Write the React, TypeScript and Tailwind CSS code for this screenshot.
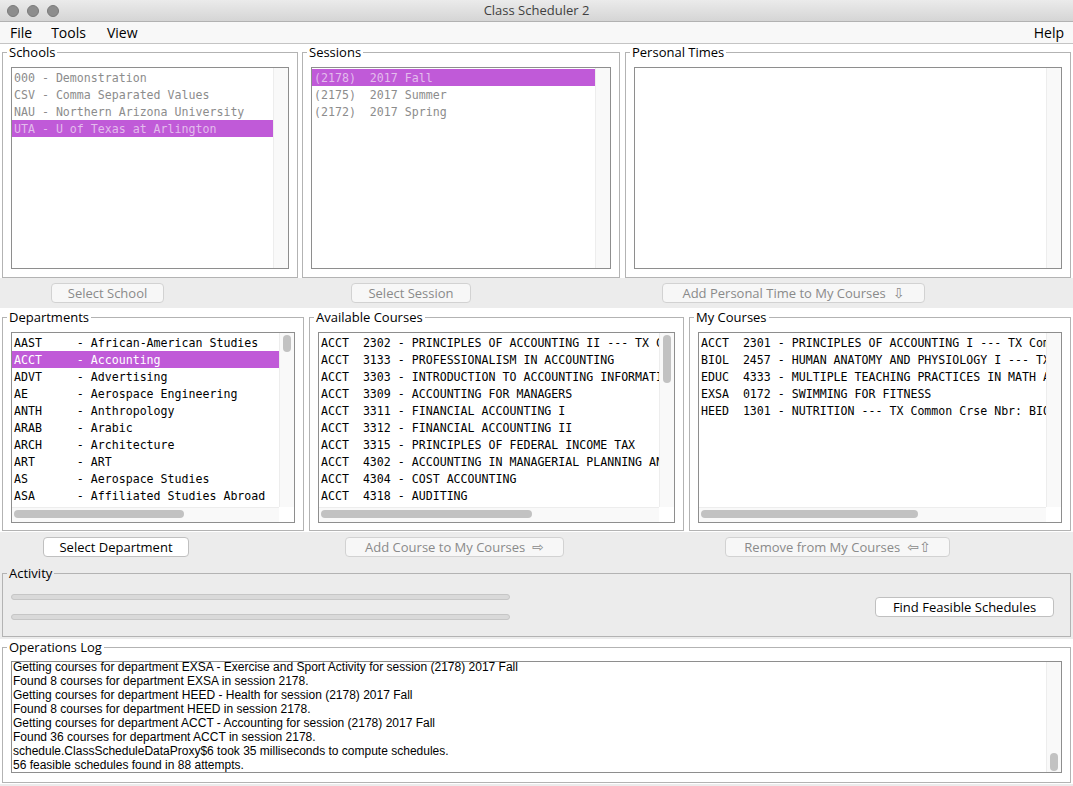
import React from 'react';
import clsx from 'clsx';

const ui = { fontFamily: '"Open Sans", "DejaVu Sans", sans-serif' };
const mono = { fontFamily: '"DejaVu Sans Mono", "Liberation Mono", monospace' };
const log = { fontFamily: '"Liberation Sans", Arial, sans-serif' };
const glyph = { fontFamily: '"DejaVu Sans", sans-serif' };

interface GroupProps {
  title: string;
  className?: string;
  children?: React.ReactNode;
}

// titled border panel, like a swing TitledBorder
const Group: React.FC<GroupProps> = ({ title, className, children }) => (
  <fieldset className={clsx('border border-[#b3b3b3] min-w-0 flex flex-col px-[8px]', className)}>
    <legend className="-ml-[4px] px-[2px] text-[13px] leading-[16px] text-black" style={ui}>
      {title}
    </legend>
    {children}
  </fieldset>
);

interface ListBoxProps {
  children?: React.ReactNode;
  vThumb?: string;
  hThumb?: string;
  horizontal?: boolean;
}

const ListBox: React.FC<ListBoxProps> = ({ children, vThumb, hThumb, horizontal }) => (
  <div className="flex-1 min-h-0 flex flex-col border border-[#8e8e8e] bg-white overflow-hidden">
    <div className="flex-1 min-h-0 flex">
      <div className="flex-1 min-w-0 overflow-hidden pt-[1px] text-[11.6px] leading-[17px]" style={mono}>
        {children}
      </div>
      <div className="w-[15px] shrink-0 bg-[#f9f9f9] border-l border-[#ededed]">
        {vThumb && <div className={clsx('w-[8px] mx-auto rounded-full bg-[#c2c2c2]', vThumb)} />}
      </div>
    </div>
    {horizontal && (
      <div className="h-[15px] shrink-0 flex">
        <div className="flex-1 bg-[#f9f9f9] border-t border-[#ededed] pl-[2px] pt-[2px]">
          {hThumb && <div className={clsx('h-[8px] rounded-full bg-[#c2c2c2]', hThumb)} />}
        </div>
        <div className="w-[15px] bg-white" />
      </div>
    )}
  </div>
);

interface RowProps {
  text: string;
  selected?: boolean;
  muted?: boolean;
}

const Row: React.FC<RowProps> = ({ text, selected, muted }) => (
  <div
    className={clsx(
      'h-[17px] pl-[2px] pt-[1px] whitespace-pre',
      selected && 'bg-[#c05ad8]',
      selected && muted && 'text-[#e3bdec]',
      selected && !muted && 'text-white',
      !selected && muted && 'text-[#8c8c8c]',
      !selected && !muted && 'text-black'
    )}
  >
    {text}
  </div>
);

interface BtnProps {
  label: string;
  arrow?: string;
  disabled?: boolean;
  className?: string;
}

const Btn: React.FC<BtnProps> = ({ label, arrow, disabled, className }) => (
  <button
    type="button"
    className={clsx(
      'h-[20px] shrink-0 rounded-[4px] border text-[13px] leading-none flex items-center justify-center',
      disabled ? 'bg-[#f7f7f7] border-[#d2d2d2] text-[#8a8a8a]' : 'bg-white border-[#c0c0c0] text-black',
      className
    )}
    style={ui}
  >
    {label}
    {arrow && (
      <span className="ml-[7px] text-[14px]" style={glyph}>
        {arrow}
      </span>
    )}
  </button>
);

const schools = [
  '000 - Demonstration',
  'CSV - Comma Separated Values',
  'NAU - Northern Arizona University',
  'UTA - U of Texas at Arlington',
];

const sessions = ['(2178)  2017 Fall', '(2175)  2017 Summer', '(2172)  2017 Spring'];

const departments: [string, string][] = [
  ['AAST', 'African-American Studies'],
  ['ACCT', 'Accounting'],
  ['ADVT', 'Advertising'],
  ['AE', 'Aerospace Engineering'],
  ['ANTH', 'Anthropology'],
  ['ARAB', 'Arabic'],
  ['ARCH', 'Architecture'],
  ['ART', 'ART'],
  ['AS', 'Aerospace Studies'],
  ['ASA', 'Affiliated Studies Abroad'],
];

const available = [
  'ACCT  2302 - PRINCIPLES OF ACCOUNTING II --- TX Common Crse Nbr: ACCT 2302',
  'ACCT  3133 - PROFESSIONALISM IN ACCOUNTING',
  'ACCT  3303 - INTRODUCTION TO ACCOUNTING INFORMATION SYSTEMS',
  'ACCT  3309 - ACCOUNTING FOR MANAGERS',
  'ACCT  3311 - FINANCIAL ACCOUNTING I',
  'ACCT  3312 - FINANCIAL ACCOUNTING II',
  'ACCT  3315 - PRINCIPLES OF FEDERAL INCOME TAX',
  'ACCT  4302 - ACCOUNTING IN MANAGERIAL PLANNING AND CONTROL',
  'ACCT  4304 - COST ACCOUNTING',
  'ACCT  4318 - AUDITING',
];

const myCourses = [
  'ACCT  2301 - PRINCIPLES OF ACCOUNTING I --- TX Common Crse Nbr: ACCT 2301',
  'BIOL  2457 - HUMAN ANATOMY AND PHYSIOLOGY I --- TX Common Crse Nbr: BIOL 2401',
  'EDUC  4333 - MULTIPLE TEACHING PRACTICES IN MATH AND SCIENCE',
  'EXSA  0172 - SWIMMING FOR FITNESS',
  'HEED  1301 - NUTRITION --- TX Common Crse Nbr: BIOL 1322',
];

const logLines = [
  'Getting courses for department EXSA - Exercise and Sport Activity for session (2178) 2017 Fall',
  'Found 8 courses for department EXSA in session 2178.',
  'Getting courses for department HEED - Health for session (2178) 2017 Fall',
  'Found 8 courses for department HEED in session 2178.',
  'Getting courses for department ACCT - Accounting for session (2178) 2017 Fall',
  'Found 36 courses for department ACCT in session 2178.',
  'schedule.ClassScheduleDataProxy$6 took 35 milliseconds to compute schedules.',
  '56 feasible schedules found in 88 attempts.',
];

export default function App() {
  return (
    <div className="w-[1073px] h-[786px] bg-[#ececec] flex flex-col overflow-hidden">
      {/* Title bar */}
      <div className="h-[22px] shrink-0 flex items-center bg-gradient-to-b from-[#ebebeb] to-[#d5d5d5] border-b border-[#b2b2b2]">
        <div className="flex gap-[8px] pl-[7px] w-[120px]">
          <span className="w-[12px] h-[12px] rounded-full bg-[#8d8d8d] border border-[#7a7a7a]" />
          <span className="w-[12px] h-[12px] rounded-full bg-[#8d8d8d] border border-[#7a7a7a]" />
          <span className="w-[12px] h-[12px] rounded-full bg-[#8d8d8d] border border-[#7a7a7a]" />
        </div>
        <div className="flex-1 text-center text-[13px] text-[#3f3f3f] pr-[120px]" style={ui}>
          Class Scheduler 2
        </div>
      </div>

      {/* Menu bar */}
      <div className="h-[22px] shrink-0 flex items-center bg-[#f8f8f8] border-b border-[#c4c4c4] text-[14px] text-black" style={ui}>
        <span className="ml-[10px]">File</span>
        <span className="ml-[19px]">Tools</span>
        <span className="ml-[21px]">View</span>
        <span className="ml-auto mr-[9px]">Help</span>
      </div>

      {/* Schools / Sessions / Personal Times */}
      <div className="h-[234px] shrink-0 bg-white flex px-[2px]">
        <Group title="Schools" className="w-[296px] pt-[7px] pb-[8px]">
          <ListBox>
            {schools.map((s, i) => (
              <Row key={s} text={s} muted selected={i === 3} />
            ))}
          </ListBox>
        </Group>
        <Group title="Sessions" className="w-[318px] ml-[4px] pt-[7px] pb-[8px]">
          <ListBox>
            {sessions.map((s, i) => (
              <Row key={s} text={s} muted selected={i === 0} />
            ))}
          </ListBox>
        </Group>
        <Group title="Personal Times" className="flex-1 ml-[5px] pt-[7px] pb-[8px]">
          <ListBox />
        </Group>
      </div>

      {/* Button row 1 */}
      <div className="h-[30px] shrink-0 flex items-center">
        <Btn label="Select School" disabled className="ml-[51px] w-[113px]" />
        <Btn label="Select Session" disabled className="ml-[187px] w-[120px]" />
        <Btn label="Add Personal Time to My Courses" arrow="⇩" disabled className="ml-[191px] w-[263px]" />
      </div>

      {/* Departments / Available / My Courses */}
      <div className="h-[224px] shrink-0 bg-white flex px-[2px] py-[1px]">
        <Group title="Departments" className="w-[302px] pt-[7px] pb-[7px]">
          <ListBox horizontal vThumb="mt-[2px] h-[17px]" hThumb="w-[170px]">
            {departments.map(([code, name], i) => (
              <Row key={code} text={`${code.padEnd(9, ' ')}- ${name}`} selected={i === 1} />
            ))}
          </ListBox>
        </Group>
        <Group title="Available Courses" className="w-[375px] ml-[5px] pt-[7px] pb-[7px]">
          <ListBox horizontal vThumb="mt-[2px] h-[48px]" hThumb="w-[211px]">
            {available.map((c) => (
              <Row key={c} text={c} />
            ))}
          </ListBox>
        </Group>
        <Group title="My Courses" className="flex-1 ml-[5px] pt-[7px] pb-[7px]">
          <ListBox horizontal hThumb="w-[217px]">
            {myCourses.map((c) => (
              <Row key={c} text={c} />
            ))}
          </ListBox>
        </Group>
      </div>

      {/* Button row 2 */}
      <div className="h-[30px] shrink-0 flex items-center">
        <Btn label="Select Department" className="ml-[43px] w-[146px]" />
        <Btn label="Add Course to My Courses" arrow="⇨" disabled className="ml-[156px] w-[219px]" />
        <Btn label="Remove from My Courses" arrow="⇦⇧" disabled className="ml-[161px] w-[225px]" />
      </div>

      {/* Activity */}
      <div className="h-[77px] shrink-0 pt-[3px] px-[2px]">
        <Group title="Activity" className="h-[72px] pb-[3px]">
          <div className="flex-1 flex items-center">
            <div className="flex flex-col gap-[14px]">
              <div className="w-[499px] h-[6px] rounded-full bg-[#d9d9d9] border border-[#c6c6c6]" />
              <div className="w-[499px] h-[6px] rounded-full bg-[#d9d9d9] border border-[#c6c6c6]" />
            </div>
            <Btn label="Find Feasible Schedules" className="ml-auto mr-[8px] w-[179px]" />
          </div>
        </Group>
      </div>

      {/* Operations Log */}
      <div className="h-[145px] shrink-0 bg-white px-[2px]">
        <Group title="Operations Log" className="h-[144px] pt-[6px] pb-[9px]">
          <div className="flex-1 min-h-0 flex border border-[#8e8e8e] bg-white overflow-hidden">
            <div className="flex-1 min-w-0 flex flex-col justify-end overflow-hidden pl-[1px] text-[12px] leading-[14px] text-black" style={log}>
              {logLines.map((l) => (
                <div key={l} className="whitespace-pre shrink-0">
                  {l}
                </div>
              ))}
            </div>
            <div className="w-[15px] shrink-0 bg-[#f9f9f9] border-l border-[#ededed] flex flex-col justify-end pb-[1px]">
              <div className="w-[8px] h-[18px] mx-auto rounded-full bg-[#c2c2c2]" />
            </div>
          </div>
        </Group>
      </div>
    </div>
  );
}
